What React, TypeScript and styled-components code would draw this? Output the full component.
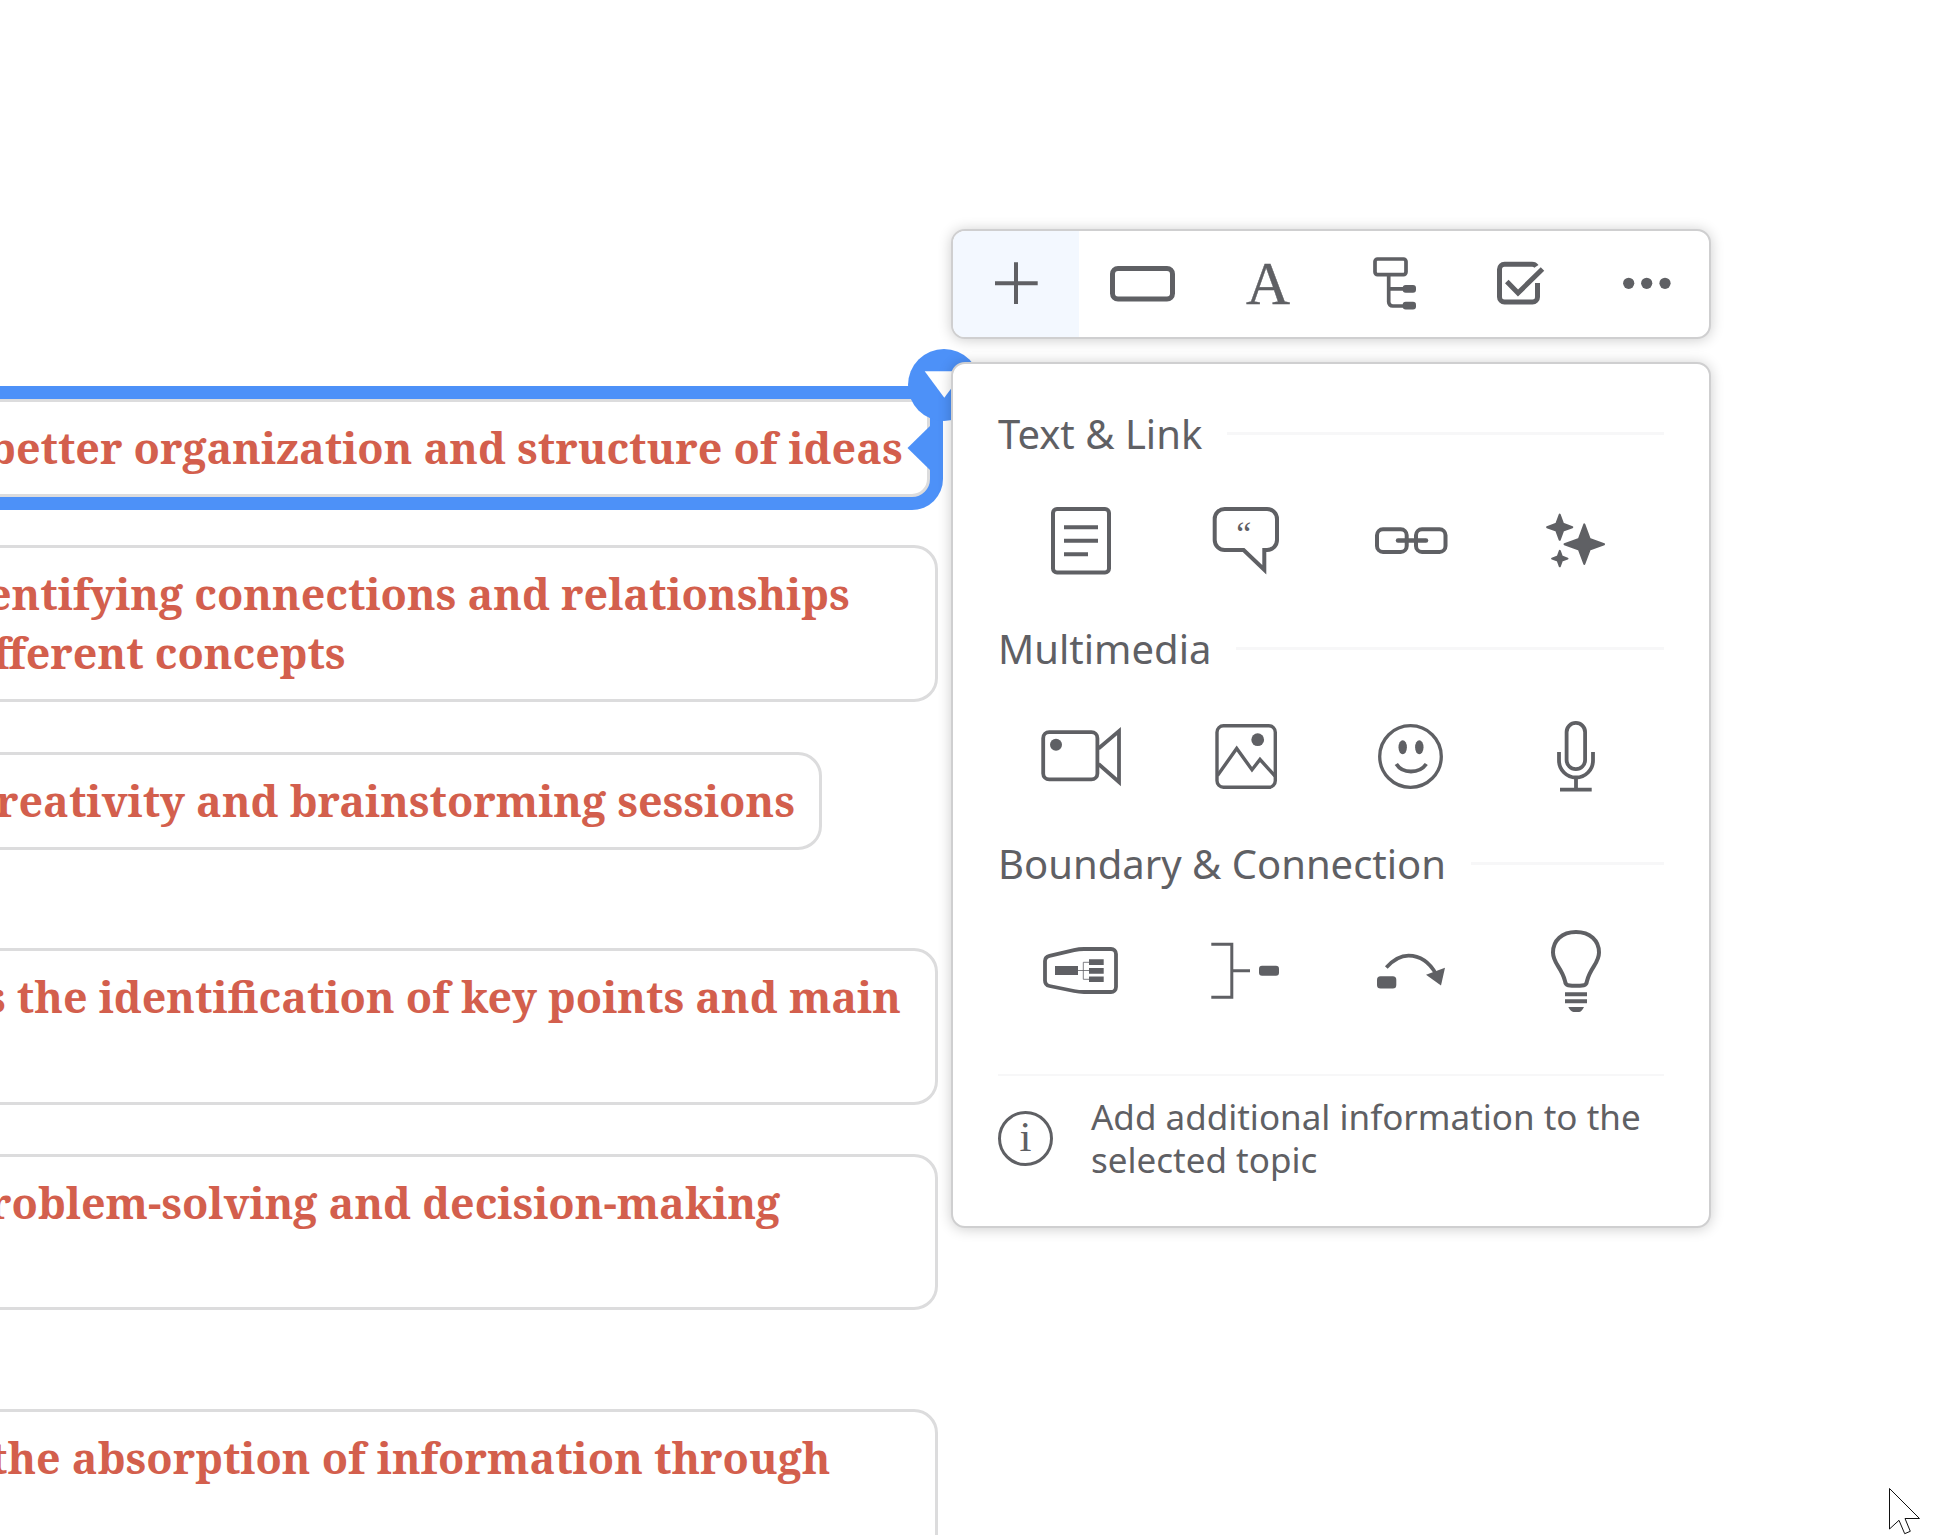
import React from "react";
import styled, { createGlobalStyle } from "styled-components";

const ink = "#5f6064";
const blue = "#4d91f8";
const sans = `"Noto Sans", "Open Sans", sans-serif`;
const serif = `"Noto Serif", "Droid Serif", "DejaVu Serif", serif`;

const GlobalStyle = createGlobalStyle`
  *, *::before, *::after { box-sizing: border-box; }
  body { margin: 0; background: #fff; }
`;

const Canvas = styled.main`
  position: relative;
  height: 100vh;
  min-height: 600px;
  overflow: hidden;
  background: #fff;
  font-family: ${sans};
  color: ${ink};
`;

/* ---- topics on the map ---- */

const Topic = styled.article<{ $top: number; $width: number; $height: number }>`
  position: absolute;
  left: -40px;
  top: ${(p) => p.$top}px;
  width: ${(p) => p.$width}px;
  height: ${(p) => p.$height}px;
  padding: 16px 0;
  border: 3px solid #dcdcdd;
  border-radius: 24px;
  background: #fff;
`;

const SelectedTopic = styled(Topic)`
  box-shadow: 0 0 0 13px ${blue};
  border-radius: 18px;
`;

const TopicLine = styled.p<{ $indent: number }>`
  margin: 0 0 0 ${(p) => p.$indent}px;
  font: 700 43px/59px ${serif};
  color: #d35f4d;
  white-space: nowrap;
`;

const Pointer = styled.svg`
  position: absolute;
  right: -4px;
  top: 23px;
  width: 24px;
  height: 46px;
`;

const CollapseButton = styled.button`
  position: absolute;
  left: 908px;
  top: 349px;
  width: 72px;
  height: 72px;
  padding: 0;
  border: 0;
  border-radius: 50%;
  background: ${blue};
  svg { display: block; width: 72px; height: 72px; }
`;

/* ---- floating tools ---- */

const Floating = styled.div`
  position: absolute;
  left: 951px;
  top: 229px;
  width: 760px;
  display: flex;
  flex-direction: column;
  gap: 23px;
`;

const Surface = styled.div`
  border: 2px solid #cfcfd0;
  border-radius: 14px;
  background: #fff;
  box-shadow: 0 1px 14px rgba(0, 0, 0, 0.2);
  overflow: hidden;
`;

const Toolbar = styled(Surface)`
  display: flex;
`;

const ToolButton = styled.button<{ $active?: boolean }>`
  flex: 1;
  height: 106px;
  display: flex;
  align-items: center;
  justify-content: center;
  padding: 0;
  border: 0;
  color: ${ink};
  background: ${(p) => (p.$active ? "#f3f8ff" : "transparent")};
  svg { width: 80px; height: 80px; }
`;

const Panel = styled(Surface)`
  padding: 42px 45px 45px;
`;

const Section = styled.section`
  padding-bottom: 2px;
`;

const SectionTitle = styled.h2`
  display: flex;
  align-items: center;
  gap: 25px;
  margin: 0;
  font: 400 40px/56px ${sans};
  &::after {
    content: "";
    flex: 1;
    height: 3px;
    margin-bottom: 2px;
    background: #f7f7f8;
  }
`;

const IconGrid = styled.div`
  display: grid;
  grid-template-columns: repeat(4, 165px);
`;

const IconButton = styled.button`
  height: 157px;
  display: flex;
  align-items: center;
  justify-content: center;
  padding: 0;
  border: 0;
  background: transparent;
  color: ${ink};
  svg { width: 101px; height: 101px; }
`;

const Hint = styled.footer`
  display: flex;
  align-items: center;
  gap: 38px;
  margin-top: 23px;
  padding-top: 19px;
  border-top: 2px solid #f7f7f8;
  svg { flex: none; width: 55px; height: 55px; }
`;

const HintText = styled.p`
  margin: 0;
  font: 400 35px/43px ${sans};
`;

const Cursor = styled.svg`
  position: absolute;
  left: 1888px;
  top: 1487px;
  width: 34px;
  height: 50px;
`;

/* ---- icons ---- */

const Glyph = ({ size, w = 4, children }: { size: number; w?: number; children: React.ReactNode }) => (
  <svg viewBox={`0 0 ${size} ${size}`} fill="none" stroke="currentColor" strokeWidth={w} aria-hidden="true">
    {children}
  </svg>
);

const solid = { fill: "currentColor", stroke: "none" };

const star = (x: number, y: number, r: number) => {
  const k = r * 0.27;
  return `M${x} ${y - r}L${x + k} ${y - k}L${x + r} ${y}L${x + k} ${y + k}L${x} ${y + r}L${x - k} ${y + k}L${x - r} ${y}L${x - k} ${y - k}Z`;
};

const tools = [
  { name: "Add", icon: <Glyph size={80}><path d="M19 39.2H61.7M40 18.3V60" /></Glyph> },
  { name: "Shape", icon: <Glyph size={80} w={5}><rect x="10.5" y="24.5" width="60" height="30.5" rx="5.5" /></Glyph> },
  {
    name: "Text style",
    icon: (
      <Glyph size={80} w={0.4}>
        <text x="40" y="60" fontSize="61" textAnchor="middle" fontFamily="Liberation Serif, serif" fill="currentColor">A</text>
      </Glyph>
    ),
  },
  {
    name: "Layout",
    icon: (
      <Glyph size={80} w={3.7}>
        <rect x="21" y="15" width="31" height="15.6" rx="2.5" />
        <path d="M34.7 31V58a4 4 0 0 0 4 4H50M34.7 44.8H50" />
        <rect x="48.7" y="41" width="13.3" height="7.8" rx="3" {...solid} />
        <rect x="48.7" y="57.7" width="13.3" height="7.8" rx="3" {...solid} />
      </Glyph>
    ),
  },
  {
    name: "Task",
    icon: (
      <Glyph size={80} w={5}>
        <path d="M56.4 22.4Q55 20.2 52 20.2H24.5a5 5 0 0 0-5 5V53a5 5 0 0 0 5 5H52.5a5 5 0 0 0 5-5V39" />
        <path d="M26.8 37.5L38 49L62.5 25" />
      </Glyph>
    ),
  },
  {
    name: "More",
    icon: (
      <Glyph size={80}>
        <circle cx="22.7" cy="39.3" r="5.6" {...solid} />
        <circle cx="40.7" cy="39.3" r="5.6" {...solid} />
        <circle cx="59" cy="39.3" r="5.6" {...solid} />
      </Glyph>
    ),
  },
];

const sections = [
  {
    title: "Text & Link",
    items: [
      {
        name: "Note",
        icon: (
          <Glyph size={101}>
            <rect x="23" y="19" width="56" height="63.4" rx="4" />
            <path d="M34 37.3H68M34 50.7H68M34 64.3H58" />
          </Glyph>
        ),
      },
      {
        name: "Comment",
        icon: (
          <Glyph size={101}>
            <path d="M29.7 19H72a10 10 0 0 1 10 10V50a10 10 0 0 1-10 10H69.3V79.8L48.6 60H29.7a10 10 0 0 1-10-10V29a10 10 0 0 1 10-10Z" />
            <text x="48.7" y="55" fontSize="34" textAnchor="middle" fontFamily="Liberation Serif, serif" {...solid}>“</text>
          </Glyph>
        ),
      },
      {
        name: "Link",
        icon: (
          <Glyph size={101}>
            <rect x="17" y="39.3" width="29.7" height="22.6" rx="6" />
            <rect x="56" y="39.3" width="29.5" height="22.6" rx="6" />
            <path d="M38 50.5H66" strokeLinecap="round" strokeWidth="4.5" />
          </Glyph>
        ),
      },
      {
        name: "AI assistant",
        icon: (
          <Glyph size={101} w={2}>
            <path d={star(34.7, 37.2, 12.6) + star(59.3, 54.2, 19.8) + star(34.8, 68.6, 7.7)} fill="currentColor" strokeLinejoin="round" />
          </Glyph>
        ),
      },
    ],
  },
  {
    title: "Multimedia",
    items: [
      {
        name: "Video",
        icon: (
          <Glyph size={101} w={3.8}>
            <rect x="13.2" y="27.2" width="54.2" height="47.2" rx="6" />
            <path d="M68.5 43.5L89 26V77L68.5 59" />
            <circle cx="26" cy="39.7" r="6" {...solid} />
          </Glyph>
        ),
      },
      {
        name: "Image",
        icon: (
          <Glyph size={101} w={3.4}>
            <rect x="22" y="20.7" width="58.3" height="61.6" rx="6.5" />
            <path d="M22.5 70.5L41.7 43.5L57 64.7L65 54.5L80 71" />
            <circle cx="62.7" cy="34.7" r="6.4" {...solid} />
          </Glyph>
        ),
      },
      {
        name: "Emoji",
        icon: (
          <Glyph size={101} w={3.3}>
            <circle cx="50.5" cy="51.5" r="30.8" />
            <ellipse cx="42.7" cy="42.3" rx="4.2" ry="7" {...solid} />
            <ellipse cx="59.3" cy="42.3" rx="4.2" ry="7" {...solid} />
            <path d="M36.3 59Q41 66.5 51 66.5T66.3 59" strokeWidth="3.8" />
          </Glyph>
        ),
      },
      {
        name: "Audio",
        icon: (
          <Glyph size={101} w={3.8}>
            <rect x="41.6" y="17.9" width="18.5" height="46.3" rx="9.2" />
            <path d="M34 47V55.5a17 17 0 0 0 34 0V47M51 72V84M35 84.7H66.7" />
          </Glyph>
        ),
      },
    ],
  },
  {
    title: "Boundary & Connection",
    items: [
      {
        name: "Boundary",
        icon: (
          <Glyph size={101} w={3.8}>
            <path d="M54 29H81a5 5 0 0 1 5 5V67a5 5 0 0 1-5 5H54Q49 72 44 71L19.5 66Q15 65 15 60.5V41Q15 36.8 19.5 35.8L44 30.2Q49 29 54 29Z" />
            <path d="M48 50.5H59M59 42.3H53.3V59.3H59" strokeWidth="0.8" />
            <path d="M25 46H48V55H25ZM59 39.3H73.7V45H59ZM59 48H73.7V53.7H59ZM59 56.4H73.7V62H59Z" {...solid} />
          </Glyph>
        ),
      },
      {
        name: "Summary",
        icon: (
          <Glyph size={101} w={3}>
            <path d="M16.3 24.2H36.8V77.2H16.3M38 50.7H55" />
            <rect x="64" y="45.7" width="20" height="10" rx="3" {...solid} />
          </Glyph>
        ),
      },
      {
        name: "Relationship",
        icon: (
          <Glyph size={101} w={3.6}>
            <rect x="17" y="56.3" width="19.3" height="12.3" rx="3.5" {...solid} />
            <path d="M26.3 47.5Q37 35.6 48.5 35.6Q66 35.8 76 54" />
            <path d="M66 54.8L85 47.7L81 65.5Z" {...solid} />
          </Glyph>
        ),
      },
      {
        name: "Idea",
        icon: (
          <Glyph size={101} w={4}>
            <path d="M51 12C37 12 28 20.5 28 32.5C28 43.5 36.5 47 40 61Q40.5 64.8 43 65.2Q51 66.4 59 65.2Q61.5 64.8 62 61C65.5 47 74 43.5 74 32.5C74 20.5 65 12 51 12Z" />
            <path d="M40 74.2H62M40 81.2H62" />
            <path d="M43.3 87H59Q56.5 92 54 92H48.5Q45.5 91.5 43.3 87Z" {...solid} />
          </Glyph>
        ),
      },
    ],
  },
];

type TopicData = { top: number; width: number; height: number; lines: { text: string; indent: number }[] };

const topics: TopicData[] = [
  {
    top: 545, width: 978, height: 157,
    lines: [
      { text: "entifying connections and relationships", indent: 24 },
      { text: "fferent concepts", indent: 30 },
    ],
  },
  { top: 752, width: 862, height: 98, lines: [{ text: "reativity and brainstorming sessions", indent: 33 }] },
  { top: 948, width: 978, height: 157, lines: [{ text: "s the identification of key points and main", indent: 22 }] },
  { top: 1154, width: 978, height: 156, lines: [{ text: "roblem-solving and decision-making", indent: 26 }] },
  { top: 1409, width: 978, height: 156, lines: [{ text: "the absorption of information through", indent: 27 }] },
];

export default function App() {
  return (
    <Canvas>
      <GlobalStyle />
      <SelectedTopic $top={399} $width={970} $height={98}>
        <TopicLine $indent={25}>better organization and structure of ideas</TopicLine>
        <Pointer viewBox="0 0 24 46" aria-hidden="true">
          <path d="M0.5 23L24 0V46Z" fill={blue} />
        </Pointer>
      </SelectedTopic>
      {topics.map((t) => (
        <Topic key={t.top} $top={t.top} $width={t.width} $height={t.height}>
          {t.lines.map((l) => (
            <TopicLine key={l.text} $indent={l.indent}>{l.text}</TopicLine>
          ))}
        </Topic>
      ))}
      <CollapseButton aria-label="Topic options">
        <svg viewBox="0 0 72 72" aria-hidden="true">
          <path d="M16.7 22.3H56L36.3 48.7Z" fill="#fff" />
        </svg>
      </CollapseButton>

      <Floating>
        <Toolbar role="toolbar" aria-label="Topic tools">
          {tools.map((t, i) => (
            <ToolButton key={t.name} $active={i === 0} aria-label={t.name}>{t.icon}</ToolButton>
          ))}
        </Toolbar>
        <Panel>
          {sections.map((s) => (
            <Section key={s.title}>
              <SectionTitle>{s.title}</SectionTitle>
              <IconGrid>
                {s.items.map((it) => (
                  <IconButton key={it.name} aria-label={it.name}>{it.icon}</IconButton>
                ))}
              </IconGrid>
            </Section>
          ))}
          <Hint>
            <svg viewBox="0 0 55 55" aria-hidden="true">
              <circle cx="27.5" cy="27.5" r="26" fill="none" stroke={ink} strokeWidth="3" />
              <text x="27.5" y="40" fontSize="43" textAnchor="middle" fontFamily="Liberation Serif, serif" fill={ink}>i</text>
            </svg>
            <HintText>Add additional information to the selected topic</HintText>
          </Hint>
        </Panel>
      </Floating>

      <Cursor viewBox="-1 -1 34 50" aria-hidden="true">
        <path d="M0.5 0.5V41L10 32.3L15.7 45.7L21.3 43.3L16 30.5H30.5Z" fill="#fff" stroke="#111" strokeWidth="1" />
      </Cursor>
    </Canvas>
  );
}
